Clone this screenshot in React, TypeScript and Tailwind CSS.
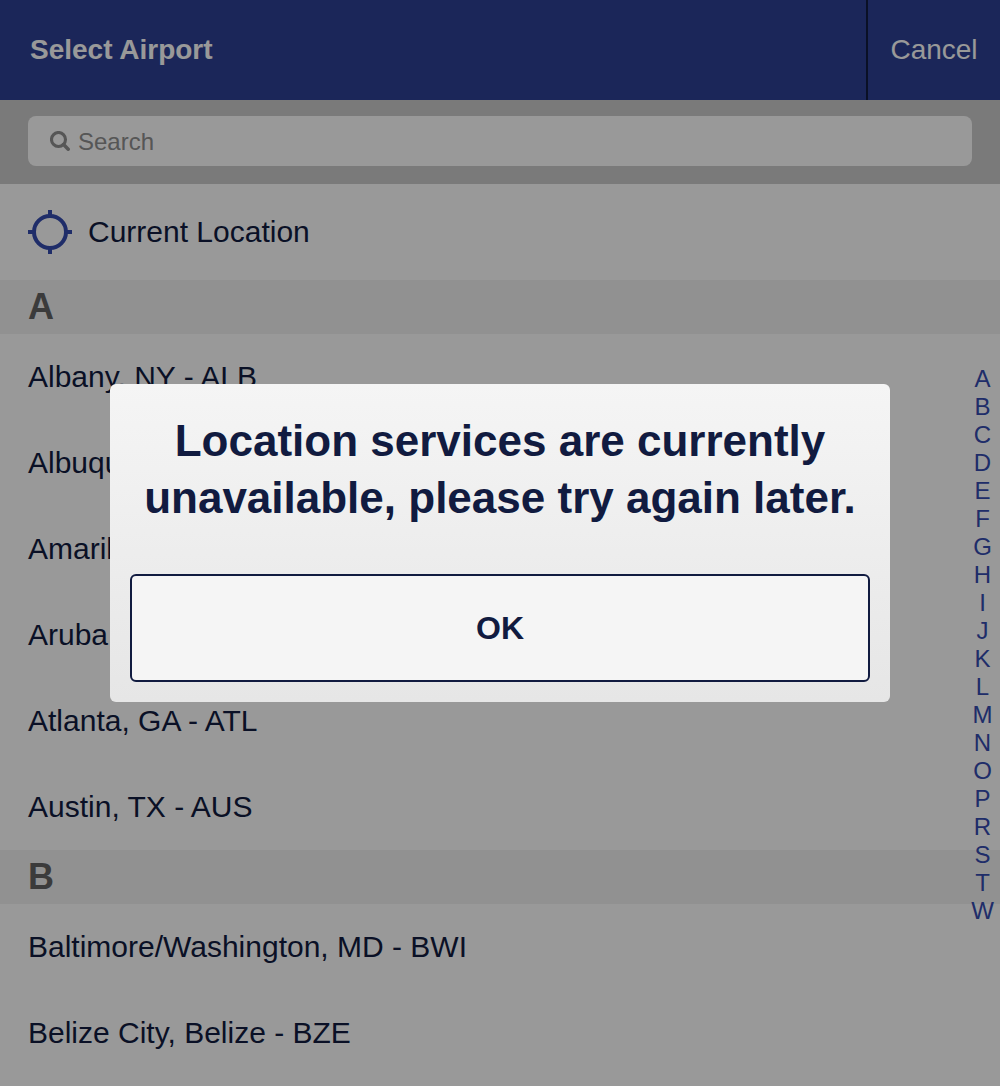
const sections = [
  {
    letter: 'A',
    airports: [
      'Albany, NY - ALB',
      'Albuquerque, NM - ABQ',
      'Amarillo, TX - AMA',
      'Aruba - AUA',
      'Atlanta, GA - ATL',
      'Austin, TX - AUS',
    ],
  },
  { letter: 'B', airports: ['Baltimore/Washington, MD - BWI', 'Belize City, Belize - BZE'] },
];

const letters = 'ABCDEFGHIJKLMNOPRSTW'.split('');

function SearchIcon() {
  return (
    <svg width="20" height="20" viewBox="0 0 20 20" fill="none" stroke="#8f8f8f" strokeWidth="3.1">
      <circle cx="8.5" cy="8.5" r="7" />
      <path d="M13.6 13.6l4.6 4.6" strokeWidth="3.5" strokeLinecap="round" />
    </svg>
  );
}

function TargetIcon() {
  return (
    <svg width="44" height="44" viewBox="0 0 44 44" fill="none" stroke="#354bb0" strokeWidth="4">
      <circle cx="22" cy="22" r="16" />
      <path d="M22 0v6M22 38v6M0 22h6M38 22h6" />
    </svg>
  );
}

function Dialog() {
  return (
    <div className="absolute inset-0 flex items-center justify-center bg-black/40">
      <div
        role="alertdialog"
        className="h-[318px] w-[780px] rounded-[6px] bg-linear-to-b from-[#f5f5f5] to-[#e6e6e6] px-5 pt-7 text-[#111b40]"
      >
        <h2 className="text-center text-[44px] leading-[57px] font-bold">
          Location services are currently
          <br />
          unavailable, please try again later.
        </h2>
        <button className="mt-12 h-[108px] w-full rounded-[6px] border-2 border-[#111b40] bg-[#f5f5f5] text-[32px] font-bold">
          OK
        </button>
      </div>
    </div>
  );
}

export default function App() {
  return (
    <div className="relative h-[1086px] w-[1000px] overflow-hidden bg-white font-['Liberation_Sans',Arial,sans-serif] text-[30px] text-[#111b40]">
      <header className="flex h-[100px] items-start justify-between bg-[#2d4094] text-[28px] leading-[99px] text-white">
        <h1 className="pl-[30px] font-bold">Select Airport</h1>
        <div className="h-[100px] w-[134px] border-l-2 border-[#111b40] text-center">
          <button className="leading-[99px]">Cancel</button>
        </div>
      </header>
      <div className="h-[84px] bg-[#cccccc] px-7 pt-4">
        <div className="flex h-[50px] items-center gap-2 rounded-[8px] bg-white pl-[22px] text-2xl text-[#8f8f8f]">
          <SearchIcon />
          <span className="self-start leading-[51px]">Search</span>
        </div>
      </div>
      <div className="flex h-24 items-center gap-4 px-7">
        <TargetIcon />
        <span className="self-start leading-[95px]">Current Location</span>
      </div>
      {sections.map((s) => (
        <section key={s.letter}>
          <h2 className="flex h-[54px] items-center bg-[#f2f2f2] px-7 text-[36px] font-bold text-[#636363]">
            {s.letter}
          </h2>
          {s.airports.map((a) => (
            <div key={a} className="h-[86px] px-7 leading-[85px]">
              {a}
            </div>
          ))}
        </section>
      ))}
      <nav className="absolute top-[365px] right-0 flex w-[35px] flex-col items-center text-2xl leading-7 text-[#354bb0]">
        {letters.map((l) => (
          <span key={l} className="leading-7">{l}</span>
        ))}
      </nav>
      <Dialog />
    </div>
  );
}
